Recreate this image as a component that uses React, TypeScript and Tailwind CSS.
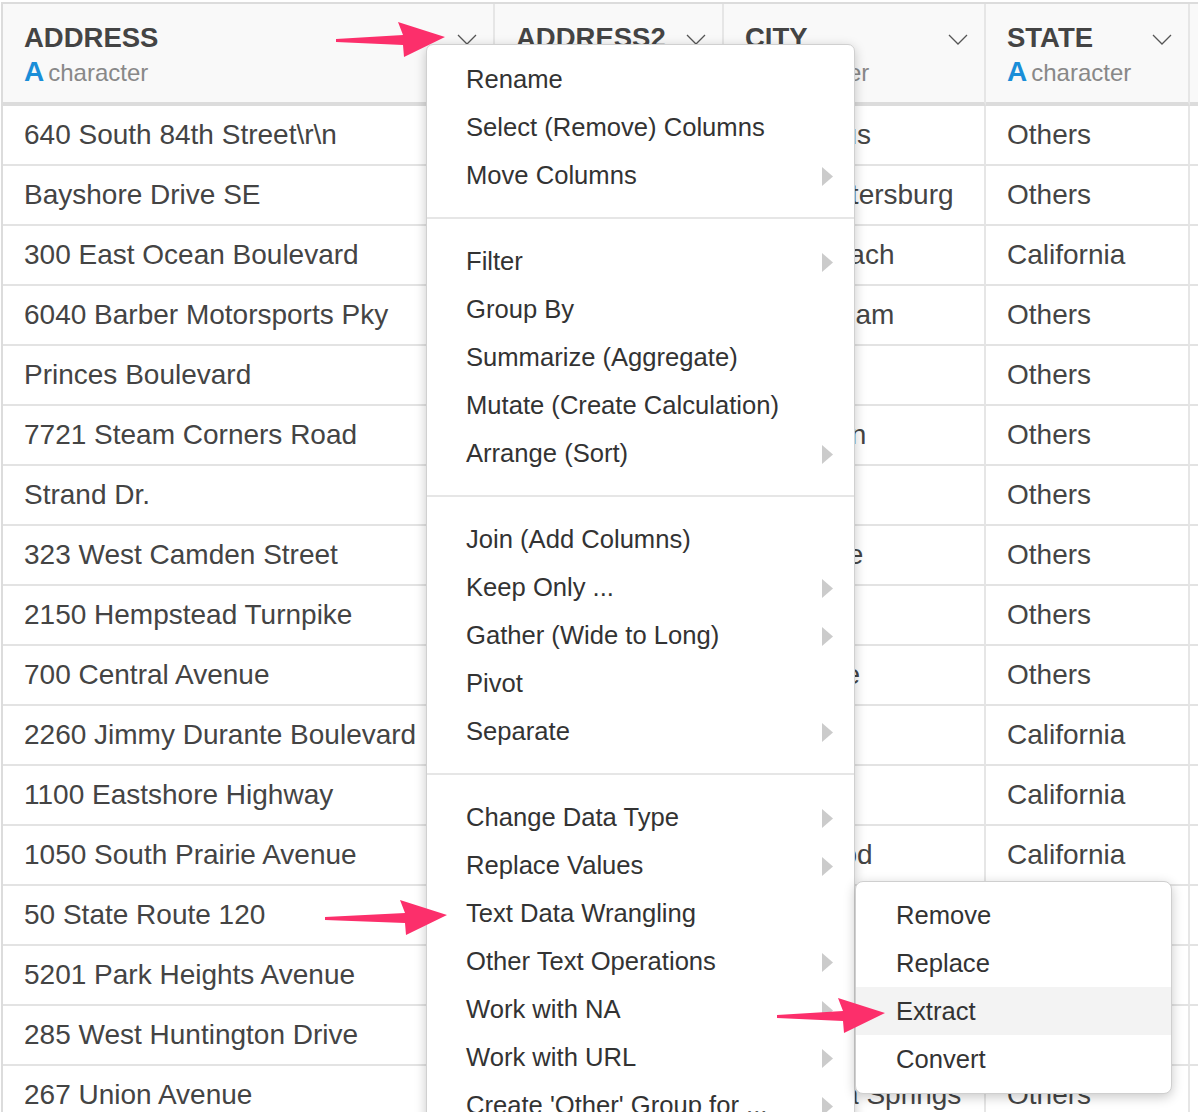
import React from "react";

const rows: [string, string, string][] = [
  ["640 South 84th Street\\r\\n", "Columbus", "Others"],
  ["Bayshore Drive SE", "Saint Petersburg", "Others"],
  ["300 East Ocean Boulevard", "Long Beach", "California"],
  ["6040 Barber Motorsports Pky", "Birmingham", "Others"],
  ["Princes Boulevard", "Perth", "Others"],
  ["7721 Steam Corners Road", "Lexington", "Others"],
  ["Strand Dr.", "Sydney", "Others"],
  ["323 West Camden Street", "Baltimore", "Others"],
  ["2150 Hempstead Turnpike", "Elmont", "Others"],
  ["700 Central Avenue", "Louisville", "Others"],
  ["2260 Jimmy Durante Boulevard", "Del Mar", "California"],
  ["1100 Eastshore Highway", "Albany", "California"],
  ["1050 South Prairie Avenue", "Inglewood", "California"],
  ["50 State Route 120", "Lebanon Hill", "Others"],
  ["5201 Park Heights Avenue", "Baltimore", "Others"],
  ["285 West Huntington Drive", "Arcadia", "California"],
  ["267 Union Avenue", "Saratoga Springs", "Others"],
];

function Chevron() {
  return (
    <svg width="20" height="12" viewBox="0 0 20 12" className="shrink-0 mt-[3px]">
      <polyline points="1,1 10,10 19,1" fill="none" stroke="#555" strokeWidth="1.3" />
    </svg>
  );
}

function HeaderCell({ title, right }: { title: string; right?: boolean }) {
  return (
    <div
      className={
        "h-[102px] bg-[#f9f9f9] border-b-4 border-[#dcdcdc] pl-[21px] pr-[16px] pt-[18px] " +
        (right ? "" : "border-r-2 border-r-[#e6e6e6]")
      }
    >
      {title && (
        <>
          <div className="flex items-center justify-between h-[32px]">
            <span className="text-[27.5px] font-bold text-[#444] leading-[32px] whitespace-nowrap">{title}</span>
            <Chevron />
          </div>
          <div className="mt-[3px] flex items-baseline h-[30px] leading-[30px] whitespace-nowrap">
            <span className="text-[28px] font-bold text-[#1a8ed8] mr-[4px]">A</span>
            <span className="text-[24px] text-[#888]">character</span>
          </div>
        </>
      )}
    </div>
  );
}

function Cell({ text, last }: { text: string; last?: boolean }) {
  return (
    <div
      className={
        "h-[60px] border-b-2 border-[#e3e3e3] pl-[21px] flex items-center text-[28px] text-[#444] whitespace-nowrap overflow-hidden " +
        (last ? "" : "border-r-2 border-r-[#e6e6e6]")
      }
    >
      {text}
    </div>
  );
}

function Tri() {
  return (
    <svg width="11" height="19" viewBox="0 0 11 19" className="shrink-0 mt-[3px]">
      <polygon points="0,0 11,9.5 0,19" fill="#cbcbcb" />
    </svg>
  );
}

function Item({ label, sub }: { label: string; sub?: boolean }) {
  return (
    <div className="h-[48px] flex items-center justify-between pl-[39px] pr-[21px] text-[25.6px] text-[#333] whitespace-nowrap">
      <span>{label}</span>
      {sub && <Tri />}
    </div>
  );
}

function Divider() {
  return <div className="my-[18px] h-[2px] bg-[#e6e6e6]" />;
}

function Arrow({ len, left, top }: { len: number; left: number; top: number }) {
  const d = `M0,19 L${len - 44},15 L${len - 49},2 L${len - 2},17 L${len - 43},37 L${len - 44},25 L0,22 Z`;
  return (
    <svg
      width={len}
      height="40"
      viewBox={`0 0 ${len} 40`}
      className="absolute"
      style={{ left, top }}
    >
      <path d={d} fill="#fc2f6b" />
    </svg>
  );
}

export default function App() {
  return (
    <div className="relative w-[1198px] h-[1112px] overflow-hidden bg-white font-['Liberation_Sans',Arial,sans-serif]">
      <div className="ml-[1px] mt-[2px] border-l-2 border-t-2 border-[#dcdcdc] grid grid-cols-[492px_229px_262px_204px_1fr]">
        <HeaderCell title="ADDRESS" />
        <HeaderCell title="ADDRESS2" />
        <HeaderCell title="CITY" />
        <HeaderCell title="STATE" />
        <HeaderCell title="" right />
        {rows.map((r, i) => (
          <React.Fragment key={i}>
            <Cell text={r[0]} />
            <Cell text="" />
            <Cell text={r[1]} />
            <Cell text={r[2]} />
            <Cell text="" last />
          </React.Fragment>
        ))}
      </div>

      {/* main menu */}
      <div className="absolute left-[426px] top-[44px] w-[429px] h-[1100px] bg-white border border-[#d0d0d0] rounded-t-[7px] shadow-[0_3px_12px_rgba(0,0,0,0.22)] pt-[10px]">
        <Item label="Rename" />
        <Item label="Select (Remove) Columns" />
        <Item label="Move Columns" sub />
        <Divider />
        <Item label="Filter" sub />
        <Item label="Group By" />
        <Item label="Summarize (Aggregate)" />
        <Item label="Mutate (Create Calculation)" />
        <Item label="Arrange (Sort)" sub />
        <Divider />
        <Item label="Join (Add Columns)" />
        <Item label="Keep Only ..." sub />
        <Item label="Gather (Wide to Long)" sub />
        <Item label="Pivot" />
        <Item label="Separate" sub />
        <Divider />
        <Item label="Change Data Type" sub />
        <Item label="Replace Values" sub />
        <Item label="Text Data Wrangling" />
        <Item label="Other Text Operations" sub />
        <Item label="Work with NA" sub />
        <Item label="Work with URL" sub />
        <Item label="Create 'Other' Group for ..." sub />
      </div>

      {/* submenu */}
      <div className="absolute left-[855px] top-[881px] w-[317px] h-[213px] bg-white border border-[#cfcfcf] rounded-[8px] shadow-[0_3px_12px_rgba(0,0,0,0.22)] pt-[9px]">
        {["Remove", "Replace", "Extract", "Convert"].map((s) => (
          <div
            key={s}
            className={
              "h-[48px] flex items-center pl-[40px] text-[25.6px] text-[#333] " +
              (s === "Extract" ? "bg-[#f3f3f3]" : "")
            }
          >
            {s}
          </div>
        ))}
      </div>

      <Arrow len={111} left={336} top={20} />
      <Arrow len={124} left={325} top={898} />
      <Arrow len={110} left={777} top={996} />
    </div>
  );
}
